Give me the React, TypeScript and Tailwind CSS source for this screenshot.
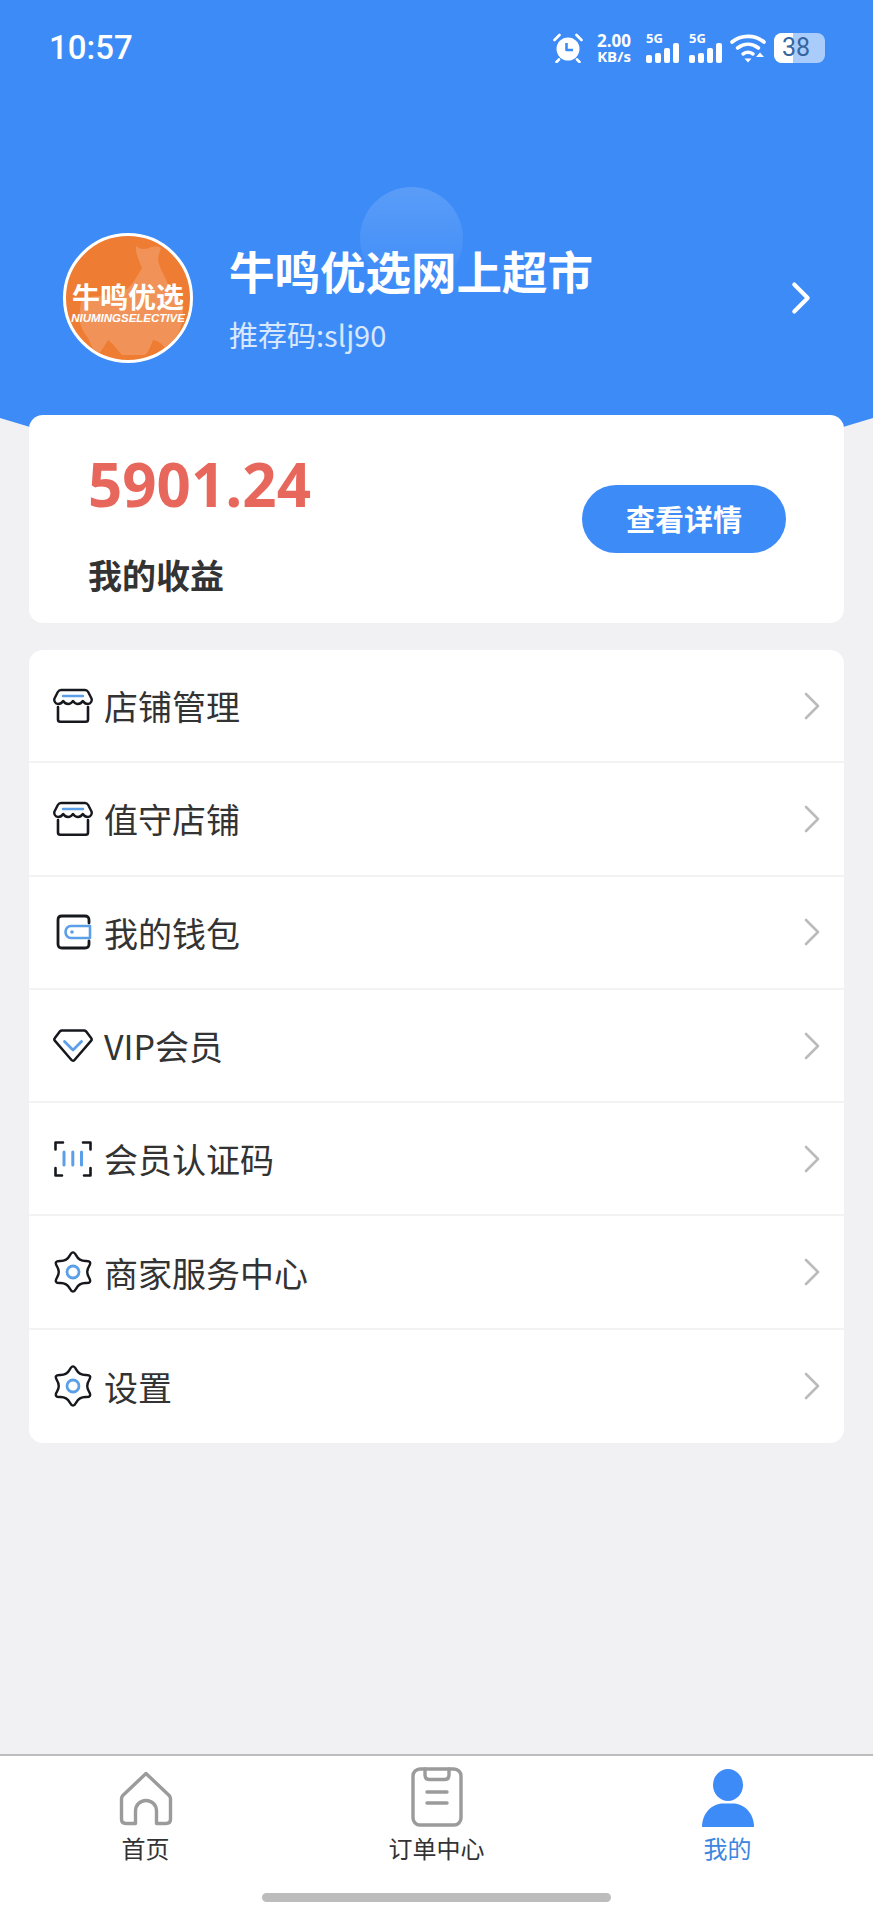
import { ChevronRight } from "lucide-react";

const BLUE = "#3d8bf7";

function gearPath() {
  const pts: [number, number][] = [];
  for (let i = 0; i < 12; i++) {
    const a = ((-90 + 30 * i) * Math.PI) / 180;
    const r = i % 2 === 0 ? 22.5 : 12.5;
    pts.push([20 + r * Math.cos(a), 21 + r * Math.sin(a)]);
  }
  let d = "";
  pts.forEach((p, i) => {
    const next = pts[(i + 1) % 12];
    const mx = (p[0] + next[0]) / 2;
    const my = (p[1] + next[1]) / 2;
    if (i === 0) {
      const last = pts[11];
      d += `M${((last[0] + p[0]) / 2).toFixed(2)} ${((last[1] + p[1]) / 2).toFixed(2)}`;
    }
    d += `Q${p[0].toFixed(2)} ${p[1].toFixed(2)} ${mx.toFixed(2)} ${my.toFixed(2)}`;
  });
  return d + "Z";
}

function StoreIcon() {
  return (
    <svg width="40" height="36" viewBox="0 0 40 36" fill="none" strokeLinecap="round" strokeLinejoin="round">
      <path d="M8 2h24c1.500 0 2.500.8 3.200 2l3.300 6.500c.8 2-.5 5.500-3.700 5.500-2.500 0-4-1.500-5-3-1 1.500-2.600 3-5 3s-3.700-1.500-4.800-3c-1.100 1.500-2.500 3-4.800 3s-4-1.500-5-3c-1 1.500-2.500 3-5 3-3.200 0-4.500-3.500-3.700-5.500L4.800 4C5.500 2.800 6.500 2 8 2z" stroke="#16181d" strokeWidth="2.400" />
      <path d="M10 8h20" stroke="#5a9fe8" strokeWidth="2.400" />
      <path d="M5 19v12.500c0 1.400.8 2.300 2.300 2.300h25.400c1.500 0 2.300-.9 2.300-2.300V19" stroke="#16181d" strokeWidth="2.600" />
    </svg>
  );
}

function WalletIcon() {
  return (
    <svg width="40" height="38" viewBox="0 0 40 38" fill="none" strokeLinecap="round" strokeLinejoin="round">
      <path d="M36 10V7c0-2.500-1.500-4-4-4H9C6.500 3 5 4.500 5 7v24c0 2.500 1.500 4 4 4h23c2.500 0 4-1.500 4-4v-3" stroke="#16181d" strokeWidth="2.800" />
      <path d="M37 13H18c-3 0-5.500 2.600-5.500 6s2.500 6 5.500 6h19z" stroke="#5a9fe8" strokeWidth="2.600" />
      <circle cx="19" cy="19" r="1.800" fill="#5a9fe8" />
    </svg>
  );
}

function DiamondIcon() {
  return (
    <svg width="40" height="36" viewBox="0 0 40 36" fill="none" strokeLinecap="round" strokeLinejoin="round">
      <path d="M9 2.500h22c1 0 1.600.4 2.200 1l4.900 6.500c.8 1 .7 2-.1 2.900L21.500 32c-.9 1-2.100 1-3 0L2 12.900c-.8-.9-.9-1.900-.1-2.900l4.900-6.500c.6-.6 1.200-1 2.200-1z" stroke="#16181d" strokeWidth="2.500" />
      <path d="M11.500 13.500 20 22l8.500-8.500" stroke="#5a9fe8" strokeWidth="2.800" />
    </svg>
  );
}

function ScanIcon() {
  return (
    <svg width="40" height="36" viewBox="0 0 40 36" fill="none" strokeLinecap="round" strokeLinejoin="round">
      <path d="M10 1.500H2.500v7M30 1.500h7.500v7M2.500 27v7.500H9M37.500 27v7.500H31" stroke="#16181d" strokeWidth="2.600" />
      <path d="M11 11v13M19.800 11v13M28.500 11v13" stroke="#5a9fe8" strokeWidth="3" />
    </svg>
  );
}

function GearIcon() {
  return (
    <svg width="40" height="42" viewBox="0 0 40 42" fill="none">
      <path d={gearPath()} stroke="#16181d" strokeWidth="2.400" strokeLinejoin="round" />
      <circle cx="20" cy="21" r="6" stroke="#5a9fe8" strokeWidth="2.800" />
    </svg>
  );
}

function HomeIcon() {
  return (
    <svg width="54" height="56" viewBox="0 0 54 56" fill="none" strokeLinejoin="round" strokeLinecap="round">
      <path d="M27 2.500 3.800 24.500c-1 1-1.300 2-1.300 3.300V48c0 3 1.500 4.500 4.500 4.500h9.500V40c0-6 4.500-10.500 10.500-10.500S37.500 34 37.500 40v12.500H47c3 0 4.500-1.500 4.500-4.500V27.800c0-1.300-.3-2.300-1.300-3.300z" stroke="#9b9b9b" strokeWidth="3.400" />
    </svg>
  );
}

function OrderIcon() {
  return (
    <svg width="52" height="60" viewBox="0 0 52 60" fill="none" strokeLinecap="round" strokeLinejoin="round">
      <rect x="2" y="2" width="48" height="56" rx="7" stroke="#9b9b9b" strokeWidth="3.400" />
      <path d="M14 2v6c0 3 1.500 4.500 4.500 4.500h15c3 0 4.500-1.500 4.500-4.500V2" stroke="#9b9b9b" strokeWidth="3.400" />
      <path d="M16 25h20M16 36h20" stroke="#9b9b9b" strokeWidth="3.400" />
    </svg>
  );
}

function PersonIcon() {
  return (
    <svg width="52" height="58" viewBox="0 0 52 58" fill={BLUE}>
      <ellipse cx="26" cy="16" rx="15" ry="16" />
      <path d="M0 58c0-14 10-23.500 21-23.500h10C42 34.500 52 44 52 58z" />
    </svg>
  );
}

function AlarmIcon() {
  return (
    <svg width="30" height="30" viewBox="0 0 30 30" fill="none">
      <circle cx="15" cy="16" r="11.500" fill="#fff" />
      <path d="M13.500 10v7h6.500" stroke={BLUE} strokeWidth="2.600" strokeLinejoin="round" />
      <path d="M1.500 7 6.500 2M28.500 7 23.500 2M6 26.500 3.500 29M24 26.500l2.500 2.500" stroke="#fff" strokeWidth="2.600" strokeLinecap="round" />
    </svg>
  );
}

function SignalIcon() {
  return (
    <div className="relative w-[33px] h-[30px]">
      <span className="absolute left-0 -top-[1px] text-[13px] leading-[13px] font-bold text-white [font-family:'Open_Sans',sans-serif]">5G</span>
      <div className="absolute left-0 bottom-0 flex items-end gap-[3px]">
        <span className="w-[6px] h-[8px] rounded-[2px] bg-white" />
        <span className="w-[6px] h-[10px] rounded-[2px] bg-white" />
        <span className="w-[6px] h-[15px] rounded-[2px] bg-white" />
        <span className="w-[6px] h-[20px] rounded-[2px] bg-white" />
      </div>
    </div>
  );
}

function WifiIcon() {
  return (
    <svg width="36" height="30" viewBox="0 0 36 30" fill="none" strokeLinecap="round">
      <path d="M2 9C11 1.500 25 1.500 34 9" stroke="#fff" strokeWidth="3.600" />
      <path d="M7.500 15c6.500-5 14.500-5 21 0" stroke="#fff" strokeWidth="3.600" />
      <path d="M13 21c3.200-2.300 6.800-2.300 10 0" stroke="#fff" strokeWidth="3.400" />
      <path d="M14.500 25.500h7L18 29.500z" fill="#fff" />
      <path d="M26 24h8l-4-4.500z" fill="#fff" />
    </svg>
  );
}

function Avatar() {
  return (
    <div className="relative w-[130px] h-[130px] shrink-0 rounded-full border-[3px] border-white bg-[#ee7c33] overflow-hidden">
      <svg className="absolute inset-0" width="124" height="124" viewBox="0 0 124 124">
        <path d="M70 10c4 3 8 4 13 2 4-2 9-2 12 0-2 6-4 11-2 16 2 7 6 12 8 18 3 8 11 12 15 20 2 10 1 24-5 33-3 5-7 10-12 13-3-4-6-7-12-8-2 5-4 11-8 15H56c-4-4-8-11-14-15-3 5-6 10-10 15-5-5-7-11-10-17-4-5-7-10-8-16-1-8 0-16 2-24 12-2 27-2 40-6 9-4 14-14 20-24-3-7-7-16-6-22z" fill="#f19358" />
      </svg>
      <div className="absolute inset-x-0 top-[45px] flex flex-col items-center">
        <span className="text-[28px] leading-[30px] font-bold text-white whitespace-nowrap">牛鸣优选</span>
        <span className="text-[11.500px] leading-[14px] font-bold italic text-white whitespace-nowrap [font-family:'Liberation_Sans',sans-serif]">NIUMINGSELECTIVE</span>
      </div>
    </div>
  );
}

const rows = [
  { icon: StoreIcon, text: "店铺管理" },
  { icon: StoreIcon, text: "值守店铺" },
  { icon: WalletIcon, text: "我的钱包" },
  { icon: DiamondIcon, text: "VIP会员" },
  { icon: ScanIcon, text: "会员认证码" },
  { icon: GearIcon, text: "商家服务中心" },
  { icon: GearIcon, text: "设置" },
];

export default function App() {
  return (
    <div className="relative flex flex-col h-[1920px] overflow-hidden bg-[#f1f1f3] [font-family:'Noto_Sans_CJK_SC','Noto_Sans',sans-serif]">
      {/* Header */}
      <div className="relative h-[440px] shrink-0 bg-[#3d8bf7] [clip-path:polygon(0_0,100%_0,100%_418px,calc(100%-30px)_427px,30px_427px,0_418px)]">
        <div className="absolute left-[360px] top-[187px] w-[103px] h-[103px] rounded-full bg-gradient-to-b from-[#5a9df8] to-[#3d8bf7]" />

        {/* Status bar */}
        <div className="relative flex items-center justify-between h-[96px] pl-[49px] pr-[48px]">
          <span className="text-[33px] font-medium text-white [font-family:Roboto,sans-serif]">10:57</span>
          <div className="flex items-center">
            <AlarmIcon />
            <div className="flex flex-col items-center w-[38px] ml-[12px] text-white font-bold [font-family:'Open_Sans',sans-serif]">
              <span className="text-[17px] leading-[17px]">2.00</span>
              <span className="text-[15px] leading-[15px]">KB/s</span>
            </div>
            <div className="ml-[13px]"><SignalIcon /></div>
            <div className="ml-[10px]"><SignalIcon /></div>
            <div className="ml-[8px]"><WifiIcon /></div>
            <div className="relative flex items-center w-[51px] h-[30px] ml-[8px] pl-[8px] rounded-[8px] bg-[#a9ccfb] overflow-hidden">
              <span className="absolute left-0 inset-y-0 w-[19px] bg-white" />
              <span className="relative text-[25px] leading-[30px] text-[#35669f] [font-family:Roboto,sans-serif]">38</span>
            </div>
          </div>
        </div>

        {/* Profile */}
        <div className="relative flex items-center mt-[137px] pl-[63px] pr-[45px]">
          <Avatar />
          <div className="flex-1 ml-[36px]">
            <div className="-mt-[2px] text-[45.500px] leading-[60px] font-bold text-white whitespace-nowrap">牛鸣优选网上超市</div>
            <div className="mt-[13px] text-[29px] leading-[42px] text-white/80">推荐码:slj90</div>
          </div>
          <ChevronRight className="w-[54px] h-[54px] text-white" strokeWidth={1.800} />
        </div>
      </div>

      {/* Earnings */}
      <div className="relative flex items-center justify-between h-[208px] mx-[29px] -mt-[25px] pl-[59px] pr-[58px] rounded-[14px] bg-white shrink-0">
        <div className="mt-[9px]">
          <div className="text-[60px] leading-[72px] font-bold text-[#e8675c] [font-family:'Open_Sans',sans-serif]">5901.24</div>
          <div className="mt-[31px] text-[34px] leading-[48px] font-bold text-[#333]">我的收益</div>
        </div>
        <div className="flex items-center justify-center w-[204px] h-[68px] rounded-full bg-[#3d8bf7] text-[29px] font-bold text-white">查看详情</div>
      </div>

      {/* Menu */}
      <div className="mx-[29px] mt-[27px] rounded-[14px] bg-white shrink-0">
        {rows.map((row, i) => (
          <div key={i} className={`flex items-center h-[113.300px] pl-[24px] pr-[8px] ${i < rows.length - 1 ? "border-b-2 border-[#f3f3f4]" : ""}`}>
            <div className="flex items-center justify-center w-[40px] shrink-0">
              <row.icon />
            </div>
            <span className="ml-[11px] flex-1 text-[34px] text-[#333]">{row.text}</span>
            <ChevronRight className="w-[48px] h-[48px] text-[#bbbbbb]" strokeWidth={1.300} />
          </div>
        ))}
      </div>

      <div className="flex-1" />

      {/* Tab bar */}
      <div className="relative h-[166px] shrink-0 bg-white border-t-2 border-[#bdbdbd]">
        <div className="grid grid-cols-3 pt-[11px]">
          <div className="flex flex-col items-center">
            <div className="flex items-end justify-center h-[60px]"><HomeIcon /></div>
            <span className="mt-[4px] text-[24px] leading-[34px] text-[#333]">首页</span>
          </div>
          <div className="flex flex-col items-center">
            <div className="flex items-end justify-center h-[60px]"><OrderIcon /></div>
            <span className="mt-[4px] text-[24px] leading-[34px] text-[#333]">订单中心</span>
          </div>
          <div className="flex flex-col items-center">
            <div className="flex items-end justify-center h-[60px]"><PersonIcon /></div>
            <span className="mt-[4px] text-[24px] leading-[34px] text-[#3c86e0]">我的</span>
          </div>
        </div>
        <div className="absolute left-[262px] bottom-[18px] w-[349px] h-[9px] rounded-full bg-[#bcbcbc]" />
      </div>
    </div>
  );
}
